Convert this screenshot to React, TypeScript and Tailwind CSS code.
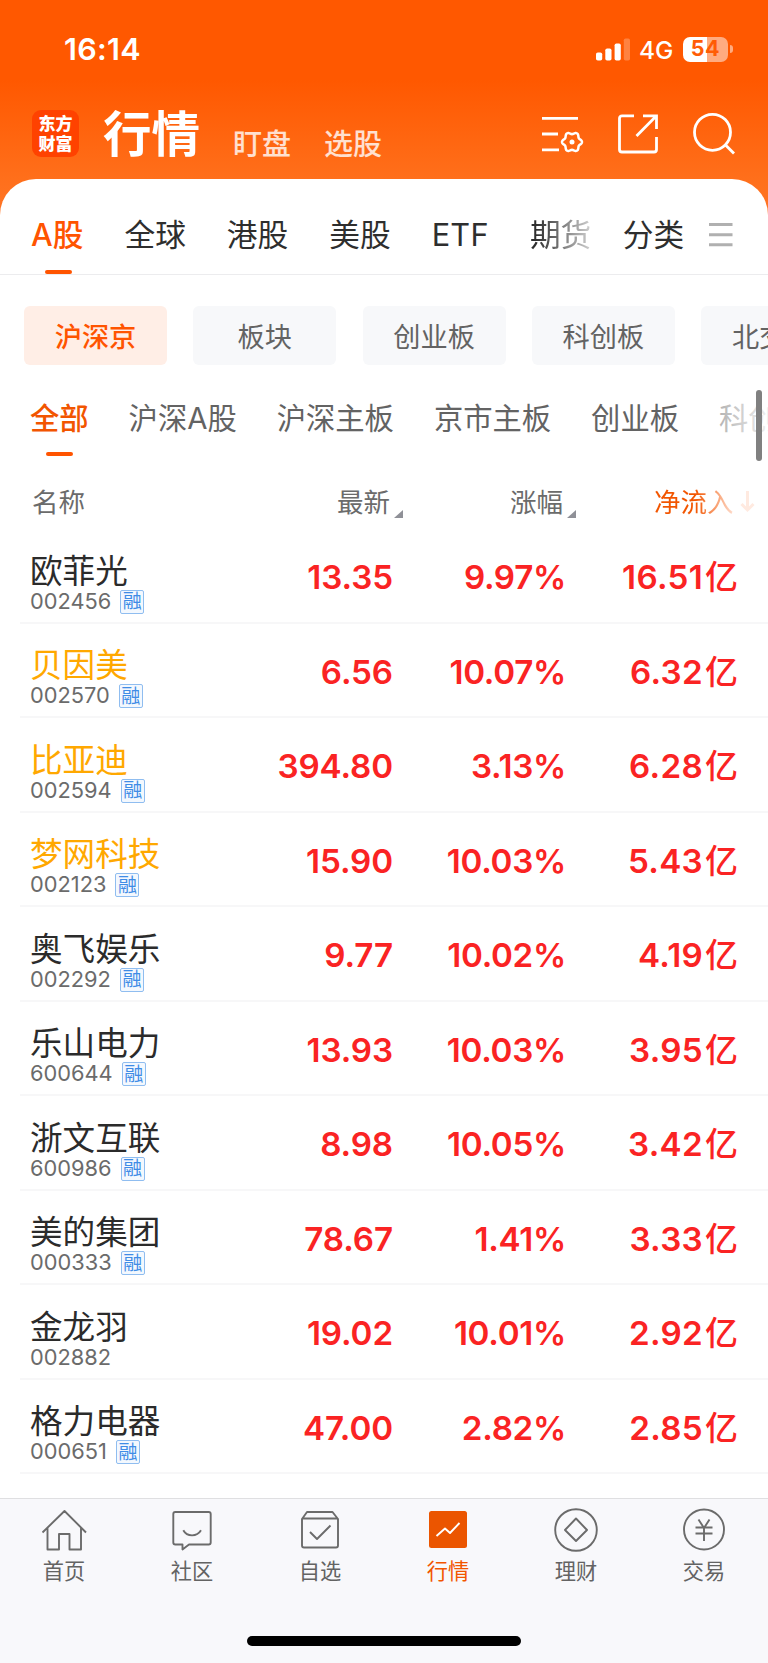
import { useState } from 'react';

interface Stock {
  name: string;
  code: string;
  price: string;
  change: string;
  inflow: string;
  margin: boolean; // 融资融券标的
  starred?: boolean; // 自选股高亮
}

const STOCKS: Stock[] = [
  { name: '欧菲光', code: '002456', price: '13.35', change: '9.97%', inflow: '16.51', margin: true },
  { name: '贝因美', code: '002570', price: '6.56', change: '10.07%', inflow: '6.32', margin: true, starred: true },
  { name: '比亚迪', code: '002594', price: '394.80', change: '3.13%', inflow: '6.28', margin: true, starred: true },
  { name: '梦网科技', code: '002123', price: '15.90', change: '10.03%', inflow: '5.43', margin: true, starred: true },
  { name: '奥飞娱乐', code: '002292', price: '9.77', change: '10.02%', inflow: '4.19', margin: true },
  { name: '乐山电力', code: '600644', price: '13.93', change: '10.03%', inflow: '3.95', margin: true },
  { name: '浙文互联', code: '600986', price: '8.98', change: '10.05%', inflow: '3.42', margin: true },
  { name: '美的集团', code: '000333', price: '78.67', change: '1.41%', inflow: '3.33', margin: true },
  { name: '金龙羽', code: '002882', price: '19.02', change: '10.01%', inflow: '2.92', margin: false },
  { name: '格力电器', code: '000651', price: '47.00', change: '2.82%', inflow: '2.85', margin: true },
];

const MARKETS = ['A股', '全球', '港股', '美股', 'ETF', '期货'];
const BOARDS = ['沪深京', '板块', '创业板', '科创板', '北交所'];
const FILTERS = ['全部', '沪深A股', '沪深主板', '京市主板', '创业板', '科创板'];

// 六齿齿轮轮廓
const GEAR = Array.from({ length: 72 }, (_, i) => {
  const a = (i * 5 * Math.PI) / 180;
  const r = 8.9 + 1.1 * Math.cos(6 * a);
  return `${(31 + r * Math.cos(a)).toFixed(2)},${(31 + r * Math.sin(a)).toFixed(2)}`;
}).join(' ');

function StatusBar() {
  return (
    <div className="flex h-[98px] items-center justify-between pl-[64px] pr-[35px]">
      <span className="text-[30.5px] font-semibold leading-none tracking-[0.3px]">16:14</span>
      <div className="flex items-center">
        <svg width="35" height="23" viewBox="0 0 35 23" fill="#fff">
          <rect x="0" y="14.5" width="6.2" height="8" rx="1.8" />
          <rect x="9.3" y="10.5" width="6.2" height="12" rx="1.8" />
          <rect x="18.6" y="5.5" width="6.2" height="17" rx="1.8" />
          <rect x="27.8" y="0.5" width="6.2" height="22" rx="1.8" opacity="0.25" />
        </svg>
        <span className="ml-[8px] mt-[2px] w-[35px] text-[24.5px] font-medium leading-none">4G</span>
        <div className="ml-[9px] flex h-[25px] w-[45px] items-center justify-center rounded-[7px] bg-[linear-gradient(90deg,#fff_54%,#ffab80_54%)] text-[21.5px] font-bold leading-none tracking-[0.5px] text-[#ff5c05]">
          54
        </div>
        <div className="ml-[2px] h-2 w-[3px] rounded-r-full bg-[#ffab80]" />
      </div>
    </div>
  );
}

function Header() {
  return (
    <div className="flex h-[81px] items-start pl-8 pr-[31px]">
      <div className="mt-3 flex h-[47px] w-[47px] flex-col items-center justify-center rounded-[9px] bg-[#ff4200] text-[17px] font-black leading-[20px]">
        <span>东方</span>
        <span>财富</span>
      </div>
      <h1 className="ml-6 mt-[13px] text-[48.5px] font-bold leading-none">行情</h1>
      <span className="ml-[33px] mt-[32px] text-[29px] font-medium leading-none text-white/80">盯盘</span>
      <span className="ml-[33px] mt-[32px] text-[29px] font-medium leading-none text-white/80">选股</span>
      <div className="ml-auto mt-[13px] flex">
        <svg width="44" height="44" viewBox="0 0 44 44" fill="none" stroke="#fff" strokeWidth="2.8">
          <path d="M1 7.3h36M1 23h16M1 38.8h17" />
          <polygon points={GEAR} strokeWidth="2.5" strokeLinejoin="round" />
          <circle cx="31" cy="31" r="2.5" fill="#fff" stroke="none" />
        </svg>
        <svg className="ml-8" width="44" height="44" viewBox="0 0 44 44" fill="none" stroke="#fff" strokeWidth="2.8">
          <path d="M17 4.8H5a2.5 2.5 0 0 0-2.5 2.5V38.500a2.5 2.5 0 0 0 2.5 2.5H37a2.5 2.5 0 0 0 2.5-2.5V26" />
          <path d="M26 4.8h13.500V18M39 5.3 19.500 25" />
        </svg>
        <svg className="ml-8" width="44" height="44" viewBox="0 0 44 44" fill="none" stroke="#fff" strokeWidth="2.8">
          <circle cx="19.5" cy="21.3" r="18" />
          <path d="M32.5 34 41 42.5" />
        </svg>
      </div>
    </div>
  );
}

function MarketTabs() {
  const [active, setActive] = useState('A股');

  return (
    <div className="flex h-24 border-b border-[#ececee] pl-[31px] text-[30.7px] leading-none text-[#2e2e2e]">
      <div className="flex gap-[41px] whitespace-nowrap">
        {MARKETS.map((m) => (
          <button
            key={m}
            onClick={() => setActive(m)}
            className={
              m === active
                ? 'relative pt-[18px] font-medium text-[#ff5400]'
                : m === '期货'
                  ? 'bg-[linear-gradient(90deg,#2e2e2e_10%,#d0d0d0_100%)] bg-clip-text pt-[18px] text-transparent'
                  : m === 'ETF'
                    ? 'pt-[18px] tracking-[0.3px]'
                    : 'pt-[18px]'
            }
          >
            {m}
            {m === active && <i className="absolute bottom-0 left-[14px] h-1 w-[27px] rounded-sm bg-[#ff5400]" />}
          </button>
        ))}
      </div>
      <button className="ml-[31.5px] pt-[18px]">分类</button>
      <svg className="ml-[25px] mt-[43px]" width="24" height="26" viewBox="0 0 24 26" stroke="#b0b0b0" strokeWidth="3">
        <path d="M0 2.5h23.5M0 12.7h23.5M0 22.8h23.5" />
      </svg>
    </div>
  );
}

function BoardChips() {
  const [active, setActive] = useState('沪深京');

  return (
    <div className="mt-[31px] flex gap-[26.3px] overflow-hidden pl-6">
      {BOARDS.map((b) => (
        <button
          key={b}
          onClick={() => setActive(b)}
          className={`h-[59px] w-[143px] shrink-0 rounded-md pt-1 text-[27.2px] leading-none ${
            b === active ? 'bg-[#ffeee6] font-medium text-[#ff5400]' : 'bg-[#f7f8fa] text-[#636363]'
          }`}
        >
          {b}
        </button>
      ))}
    </div>
  );
}

function FilterTabs() {
  const [active, setActive] = useState('全部');

  return (
    <div className="relative mt-[25px] h-[74px]">
      <div className="flex h-[66px] gap-[40px] overflow-hidden whitespace-nowrap pl-[30px] text-[29.3px] leading-none text-[#636363]">
        {FILTERS.map((f) => (
          <button
            key={f}
            onClick={() => setActive(f)}
            className={f === active ? 'relative shrink-0 pb-[9px] font-medium text-[#f25500]' : 'shrink-0 pb-[9px]'}
          >
            {f}
            {f === active && <i className="absolute bottom-0 left-4 h-1 w-[27px] rounded-sm bg-[#ff5400]" />}
          </button>
        ))}
      </div>
      <div className="absolute right-0 top-0 h-[62px] w-[78px] bg-linear-to-r from-white/30 to-white/90" />
      <div className="absolute right-[6px] top-0 h-[71px] w-[6px] rounded-full bg-[#808080]" />
    </div>
  );
}

function SortMark() {
  return (
    <svg className="absolute -right-[13px] bottom-[-3px]" width="9" height="8" viewBox="0 0 9 8">
      <path d="M9 0V8H0Z" fill="#8f9097" />
    </svg>
  );
}

function TableHead() {
  return (
    <div className="flex h-[65px] items-center pl-8 pt-[11px] text-[26.5px] leading-none text-[#6b6b6b]">
      <span className="w-[210px]">名称</span>
      <span className="flex w-[148px] justify-end">
        <span className="relative">最新<SortMark /></span>
      </span>
      <span className="flex w-[173px] justify-end">
        <span className="relative">涨幅<SortMark /></span>
      </span>
      <span className="ml-[91px] w-[82px] whitespace-nowrap bg-[linear-gradient(90deg,#f25500_50%,#ffe6db_100%)] bg-clip-text text-transparent">
        净流入
      </span>
      <svg className="ml-[3px]" width="17" height="24" viewBox="0 0 17 24" fill="none" stroke="#ffeae0" strokeWidth="3">
        <path d="M8.5 1v19M2.5 14l6 6 6-6" />
      </svg>
    </div>
  );
}

function StockRow({ stock }: { stock: Stock }) {
  return (
    <div className="ml-5 flex h-[94.5px] items-center border-b-2 border-[#f7f7f8] pl-[10px] leading-none">
      <div className="w-[200px] pt-[18px]">
        <div className={`text-[32.6px] ${stock.starred ? 'text-[#ffa800]' : 'text-[#2b2b2b]'}`}>{stock.name}</div>
        <div className="mt-[2px] flex h-6 items-center text-[21.8px] text-[#6b6b6b]">
          {stock.code}
          {stock.margin && (
            <span className="ml-[9px] flex h-6 w-6 items-center justify-center rounded-xs border border-[#8fbdf0] bg-[#f3f8fe] text-[19px] text-[#3f8ce6]">
              融
            </span>
          )}
        </div>
      </div>
      <div className="flex items-center pt-[5px] text-right text-[33.2px] font-semibold text-[#fa2323]">
        <span className="w-[163px] tracking-[-0.1px]">{stock.price}</span>
        <span className="w-[173px] tracking-[-0.3px]">{stock.change}</span>
        <span className="flex w-[172px] items-center justify-end tracking-[0.3px]">
          {stock.inflow}
          <span className="ml-[2px] text-[33px] font-medium tracking-normal">亿</span>
        </span>
      </div>
    </div>
  );
}

function NavIcon({ name }: { name: string }) {
  return (
    <svg width="46" height="46" viewBox="0 0 46 46" fill="none" stroke="#6b6b6b" strokeWidth="1.9" strokeLinejoin="round">
      {name === '首页' && (
        <path d="M1.5 25.5 23.5 4 45 25.5M6.5 21V42.500H18V27H28.500V42.500H40V21" />
      )}
      {name === '社区' && (
        <>
          <path d="M6.3 5H39.700a2 2 0 0 1 2 2V35.500a2 2 0 0 1-2 2H20L13.500 42.500V37.500H6.300a2 2 0 0 1-2-2V7a2 2 0 0 1 2-2Z" />
          <path d="M14.3 23.3C18 30 28 30 32 23.3" />
        </>
      )}
      {name === '自选' && (
        <>
          <path d="M5 12 10 5H35.500L41 12V38.500a2 2 0 0 1-2 2H7a2 2 0 0 1-2-2ZM5 11.500H41" />
          <path d="M13 25 20 32 33.5 18.5" />
        </>
      )}
      {name === '行情' && (
        <>
          <rect x="4" y="4" width="38" height="37" rx="2.5" fill="#eb5500" stroke="none" />
          <path d="M11.5 29 20 21.5 25 26 34.5 16" stroke="#fff" />
        </>
      )}
      {name === '理财' && (
        <>
          <circle cx="23" cy="23" r="20.8" />
          <path d="M23 11.5 34 23 23 34 12 23Z" />
        </>
      )}
      {name === '交易' && (
        <>
          <circle cx="23" cy="22.5" r="20" />
          <path d="M17.5 12.5 23 21 28.5 12.5M14.5 20.5H31.500M14.5 26.5H31.500M23 20.5V34" />
        </>
      )}
    </svg>
  );
}

function BottomNav() {
  const [active, setActive] = useState('行情');

  return (
    <nav className="mt-auto h-[165px] border-t border-[#dfdfe1] bg-[#f8f8fb]">
      <div className="grid h-[137px] grid-cols-6">
        {['首页', '社区', '自选', '行情', '理财', '交易'].map((n) => (
          <button key={n} onClick={() => setActive(n)} className="flex flex-col items-center pt-2">
            <NavIcon name={n} />
            <span className={`mt-2 text-[21.2px] leading-none ${n === active ? 'text-[#f25500]' : 'text-[#636363]'}`}>{n}</span>
          </button>
        ))}
      </div>
      <div className="mx-auto h-[10px] w-[274px] rounded-full bg-black" />
    </nav>
  );
}

export default function App() {
  return (
    <div className="flex h-[1663px] w-[768px] flex-col overflow-hidden bg-white font-[Inter,'Noto_Sans_CJK_SC',sans-serif]">
      <div className="bg-[linear-gradient(180deg,#ff5800_0px,#ff5800_80px,#ff6f1b_179px,#ff7526_215px)] text-white">
        <StatusBar />
        <Header />
        <div className="h-24 rounded-t-[36px] bg-white">
          <MarketTabs />
        </div>
      </div>
      <BoardChips />
      <FilterTabs />
      <TableHead />
      {STOCKS.map((s) => (
        <StockRow key={s.code} stock={s} />
      ))}
      <BottomNav />
    </div>
  );
}
